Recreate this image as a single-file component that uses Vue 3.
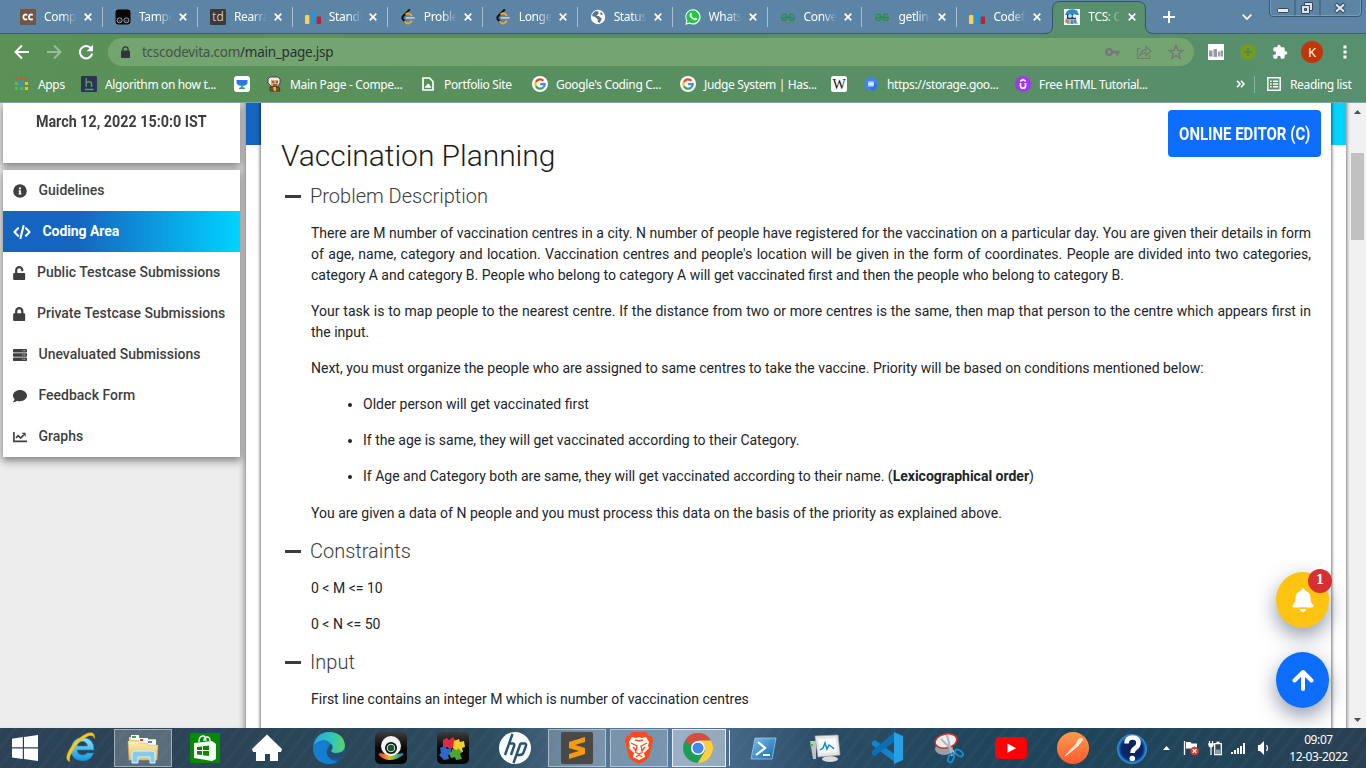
<script setup>
const tabs = [
  { icon: 'cc', title: 'Compete' },
  { icon: 'tamper', title: 'Tampermonkey' },
  { icon: 'td', title: 'Rearrange' },
  { icon: 'bars', title: 'Standings' },
  { icon: 'leet', title: 'Problems' },
  { icon: 'leet', title: 'Longest' },
  { icon: 'globe', title: 'Status' },
  { icon: 'whats', title: 'WhatsApp' },
  { icon: 'gfg', title: 'Convert' },
  { icon: 'gfg', title: 'getline' },
  { icon: 'bars', title: 'Codeforces' },
  { icon: 'tcs', title: 'TCS: CodeVita', active: true },
]
const bookmarks = [
  { icon: 'apps', text: 'Apps' },
  { icon: 'hack', text: 'Algorithm on how t...' },
  { icon: 'cup' },
  { icon: 'prof', text: 'Main Page - Compe...' },
  { icon: 'doc', text: 'Portfolio Site' },
  { icon: 'google', text: "Google's Coding C..." },
  { icon: 'google', text: 'Judge System | Has...' },
  { icon: 'wiki' },
  { icon: 'hex', text: 'https://storage.goo...' },
  { icon: 'udemy', text: 'Free HTML Tutorial...' },
]
const menu = [
  { icon: 'info', text: 'Guidelines', w: 14 },
  { icon: 'code', text: 'Coding Area', w: 18, active: true },
  { icon: 'unlock', text: 'Public Testcase Submissions', w: 12.5 },
  { icon: 'lock', text: 'Private Testcase Submissions', w: 12.5 },
  { icon: 'server', text: 'Unevaluated Submissions', w: 14 },
  { icon: 'comment', text: 'Feedback Form', w: 14 },
  { icon: 'chart', text: 'Graphs', w: 14 },
]
const tasks = [
  { icon: 'ie' }, { icon: 'explorer', box: true }, { icon: 'store' }, { icon: 'house' }, { icon: 'edge' },
  { icon: 'cam' }, { icon: 'puzzle' }, { icon: 'hp' }, { icon: 'sublime', box: true }, { icon: 'brave', box: true },
  { icon: 'chrome', box: true, front: true }, { icon: 'shell' }, { icon: 'monitor' }, { icon: 'vscode' },
  { icon: 'snip' }, { icon: 'youtube' }, { icon: 'postman' }, { icon: 'help' },
]
</script>

<template>
  <div class="screen">
    <svg class="sprite" aria-hidden="true">
      <defs>
        <linearGradient id="gEdge" x1="0" y1="0" x2="1" y2="0"><stop offset="0" stop-color="#2aa7e0" /><stop offset=".6" stop-color="#2fc6b8" /><stop offset="1" stop-color="#62d658" /></linearGradient>
        <linearGradient id="gEdge2" x1="0" y1="0" x2="0" y2="1"><stop offset="0" stop-color="#1d8fdc" /><stop offset="1" stop-color="#0b4fa0" /></linearGradient>
        <linearGradient id="gFolder" x1="0" y1="0" x2="0" y2="1"><stop offset="0" stop-color="#fdf0b6" /><stop offset="1" stop-color="#e6bd5c" /></linearGradient>
        <linearGradient id="gShell" x1="0" y1="0" x2="1" y2="1"><stop offset="0" stop-color="#7cc0ea" /><stop offset="1" stop-color="#1764ab" /></linearGradient>
        <linearGradient id="gPost" x1="0" y1="0" x2="0" y2="1"><stop offset="0" stop-color="#ff9a4a" /><stop offset="1" stop-color="#ff5a30" /></linearGradient>
        <linearGradient id="gIe" x1="0" y1="0" x2="0" y2="1"><stop offset="0" stop-color="#8fe4ff" /><stop offset="1" stop-color="#1495dd" /></linearGradient>
        <linearGradient id="gRain"><stop offset="0" stop-color="#e33" /><stop offset=".4" stop-color="#f6b31c" /><stop offset=".7" stop-color="#4ec04e" /><stop offset="1" stop-color="#2c6de0" /></linearGradient>
        <radialGradient id="gHelp"><stop offset="0" stop-color="#0a1e50" /><stop offset=".75" stop-color="#082a72" /><stop offset="1" stop-color="#2f9be8" /></radialGradient>
        <linearGradient id="gBlack" x1="0" y1="0" x2="0" y2="1"><stop offset="0" stop-color="#3c3c3c" /><stop offset=".5" stop-color="#080808" /></linearGradient>
      </defs>
      <symbol id="cc" viewBox="0 0 16 16"><rect width="16" height="16" fill="#725544" /><path d="M7.3 5.8Q3.4 4.6 3.4 8T7.3 10.2M12.8 5.8Q8.9 4.6 8.9 8T12.8 10.2" fill="none" stroke="#fff" stroke-width="1.8" /></symbol>
      <symbol id="tamper" viewBox="0 0 16 16"><rect width="16" height="16" rx="3" fill="#080808" stroke="#b6c2cb" stroke-width=".6" /><circle cx="4.6" cy="11.3" r="2.5" fill="#111" stroke="#9fb0bd" stroke-width=".9" /><circle cx="11.4" cy="11.3" r="2.5" fill="#111" stroke="#9fb0bd" stroke-width=".9" /><path d="M3.8 11.8h1.8m5 0h1.8" stroke="#4a6c8c" stroke-width="1.2" /></symbol>
      <symbol id="td" viewBox="0 0 16 16"><rect width="16" height="16" rx="1" fill="#3a3a3a" /><text x="8" y="12.3" text-anchor="middle" font-family="Noto Sans, sans-serif" font-size="12" font-weight="300" fill="#eee">td</text></symbol>
      <symbol id="bars" viewBox="0 0 16 16"><rect x="0" y="6" width="4.4" height="9" rx="1" fill="#fbcf52" /><rect x="5.8" y="3" width="4.4" height="12" rx="1" fill="#2197d5" /><rect x="11.6" y="7.4" width="4.4" height="7.6" rx="1" fill="#b92332" /></symbol>
      <symbol id="leet" viewBox="0 0 16 16"><path d="M9.2 1 3.3 7q-1.8 2 0 3.8l2 2.2" fill="none" stroke="#111" stroke-width="2" stroke-linecap="round" /><path d="m5 12.7 1.2 1.1q1.8 1.5 3.7 0l1.6-1.5M6.2 5q2-1.6 3.7 0l1.6 1.2" fill="none" stroke="#f5a42a" stroke-width="1.9" stroke-linecap="round" /><path d="M6.6 8.8H14" stroke="#c5c7c9" stroke-width="1.8" stroke-linecap="round" /></symbol>
      <symbol id="globe" viewBox="0 0 16 16"><circle cx="8" cy="8" r="7.2" fill="#fff" /><path d="M2.4 5 5.5 2l2.7.6.6 1.8-2.4 2 2.6.9 2.8 2.4-2.2 4.3-2-1.5.2-2.2-3-2.6-2.5-.5z" fill="#5a7187" /><path d="m11 3 2 2.2-1.7 1-1.2-1.4z" fill="#5a7187" /></symbol>
      <symbol id="whats" viewBox="0 0 16 16"><path d="M.3 15.7 1.4 11.8A7.6 7.6 0 1 1 4.5 14.7Z" fill="#fff" /><path d="m1.7 14.2.8-2.7A6.4 6.4 0 1 1 4.8 13.5Z" fill="#1cc83d" /><path d="M5.2 4.1c1-1 1.4.2 1.8 1.4L6.5 6.8q1 1.8 2.8 2.5l1-.9 2 1.1q-.2 2-2.2 2Q6.8 11 4.8 7.7 4 5.7 5.2 4.1Z" fill="#fff" /></symbol>
      <symbol id="gfg" viewBox="0 0 16 16"><path d="M2.2 6.2Q5.800 3.800 6.700 7 7.600 11.300 4.300 11.500 1.500 11.300 1.600 8.500h12.800Q14.500 11.300 11.700 11.500 8.400 11.300 9.300 7q.9-3.200 4.500-.8" fill="none" stroke="#2f8d46" stroke-width="1.400" /></symbol>
      <symbol id="tcs" viewBox="0 0 16 16"><rect width="16" height="16" fill="#f5f5f5" /><path d="M1 6 3 2q4-3 10-.5L15 6z" fill="#2b8fc6" /><path d="M3 5h9v5H3z" fill="#335" /><circle cx="6" cy="7" r="2" fill="#a9dcf3" /><circle cx="10.5" cy="7" r="2" fill="#d6f0fb" /><path d="M4 10h8l2 5H3z" fill="#8abfd8" /><path d="m2 9 3 3-1 3-3-2z" fill="#b38d56" /><path d="M8 11v4m3-4v3" stroke="#27506f" /></symbol>
      <symbol id="apps" viewBox="0 0 16 16"><path d="M1 1h3v3H1zm5 0h3v3H6zm5 0h3v3h-3z" fill="#f14438" /><path d="M1 6h3v3H1zm0 5h3v3H1zm5 0h3v3H6z" fill="#45c163" /><path d="M6 6h3v3H6z" fill="#3a8cf4" /><path d="M11 6h3v3h-3zm0 5h3v3h-3z" fill="#fbb912" /></symbol>
      <symbol id="hack" viewBox="0 0 16 16"><rect width="16" height="16" rx="1" fill="#2b3454" /><path d="M5.2 2v9M5.2 7.3Q6 5.8 8 5.8q2.6 0 2.6 2.6V11M3.8 13.5h8.5" fill="none" stroke="#5a9b66" stroke-width="1.4" /></symbol>
      <symbol id="cup" viewBox="0 0 16 16"><rect width="16" height="16" rx="3" fill="#fff" /><path d="M2.5 4h11v3q-1 2.7-4.2 2.7H6.7Q3.5 9.7 2.5 7z" fill="#2b79e8" /><path d="M8 9.5q0 2.5 3 3H5q3-.5 3-3" fill="#1eae6a" stroke="#1eae6a" /></symbol>
      <symbol id="prof" viewBox="0 0 16 16"><path d="m2 3 2-2h8l2 2v4l-2 3H5L2 7z" fill="#eceae6" stroke="#3b2a20" stroke-width=".8" /><path d="M5 4h7v6H5z" fill="#e5a36a" /><path d="M6 6h2m2 0h2M7 9h4" stroke="#322" /><path d="M4 11h9l1 4H4z" fill="#8a4d20" stroke="#322" stroke-width=".7" /><path d="M7 11h3v4H8z" fill="#efb03a" /></symbol>
      <symbol id="doc" viewBox="0 0 16 16"><path d="M3 2h6.5L13 5.5V14H3z" fill="none" stroke="#fff" stroke-width="1.7" /><path d="M4.8 11.7q0-2 1.5-2 .6-2 2-1.7Q10 8 10 9.7q1.3.3 1.2 2z" fill="#fff" /></symbol>
      <symbol id="google" viewBox="0 0 16 16"><circle cx="8" cy="8" r="8" fill="#fff" /><g fill="none" stroke-width="2.2"><path d="M11.4 4.7A4.7 4.7 0 0 0 3.9 5.9" stroke="#ea4335" /><path d="M3.9 5.9a4.7 4.7 0 0 0 0 4.3" stroke="#fbbc05" /><path d="M3.9 10.2a4.7 4.7 0 0 0 7.3 1.3" stroke="#34a853" /><path d="M11.2 11.5q1.6-1.4 1.5-3.4H8.2" stroke="#4285f4" /></g></symbol>
      <symbol id="wiki" viewBox="0 0 16 16"><rect width="16" height="16" rx="2.5" fill="#fff" /><text x="8" y="12.5" text-anchor="middle" font-family="Liberation Serif, serif" font-size="14" fill="#111">W</text></symbol>
      <symbol id="hex" viewBox="0 0 16 16"><path d="M4.500 1.500h7L15.500 8l-4 6.500h-7L.5 8z" fill="#4384f3" /><path d="m10.500 5.500 4 4-2.800 5H9L5.500 11z" fill="#3470dc" /><path d="M5.200 5.400h5.600v5.200H5.200z" fill="#b9d0fa" /><path d="M5.200 8h5.600" stroke="#e8f0fe" stroke-width="1.400" /></symbol>
      <symbol id="udemy" viewBox="0 0 16 16"><circle cx="8" cy="8" r="8" fill="#a435f0" /><path d="M5.5 7v2.7q0 2.5 2.500 2.500t2.500-2.500V7M5.300 5.200 8 3.600l2.700 1.600" fill="none" stroke="#fff" stroke-width="1.700" /></symbol>
      <symbol id="info" viewBox="0 0 512 512"><path d="M256 8a248 248 0 1 0 0 496 248 248 0 0 0 0-496zm0 110a42 42 0 1 1 0 84 42 42 0 0 1 0-84zm56 254c0 7-5 12-12 12h-88c-7 0-12-5-12-12v-24c0-7 5-12 12-12h12v-64h-12c-7 0-12-5-12-12v-24c0-7 5-12 12-12h64c7 0 12 5 12 12v100h12c7 0 12 5 12 12z" fill="currentColor" /></symbol>
      <symbol id="code" viewBox="0 0 640 512"><path d="M175 120 45 256l130 136M465 120l130 136-130 136M375 35 265 477" fill="none" stroke="currentColor" stroke-width="76" stroke-linejoin="round" stroke-linecap="round" /></symbol>
      <symbol id="lock" viewBox="0 0 448 512"><path d="M400 224h-24v-72a152 152 0 0 0-304 0v72H48c-27 0-48 21-48 48v192c0 27 21 48 48 48h352c27 0 48-21 48-48V272c0-27-21-48-48-48zm-104 0H152v-72a72 72 0 0 1 144 0z" fill="currentColor" /></symbol>
      <symbol id="unlock" viewBox="0 0 448 512"><path d="M400 256H152V153a72 72 0 0 1 144-1v16c0 13 11 24 24 24h32c13 0 24-11 24-24v-16a152 152 0 0 0-304 0v104H48c-27 0-48 21-48 48v160c0 27 21 48 48 48h352c27 0 48-21 48-48V304c0-27-21-48-48-48z" fill="currentColor" /></symbol>
      <symbol id="server" viewBox="0 0 512 512"><rect y="40" width="512" height="122" rx="24" fill="currentColor" /><rect y="195" width="512" height="122" rx="24" fill="currentColor" /><rect y="350" width="512" height="122" rx="24" fill="currentColor" /><path d="M340 101h110M340 256h110M340 411h110" stroke="#c5cad4" stroke-width="42" stroke-dasharray="42 26" /></symbol>
      <symbol id="comment" viewBox="0 0 512 512"><path d="M256 32C115 32 0 125 0 240c0 50 21 95 57 131-13 50-54 95-55 96-3 2-3 6-2 9s4 4 7 4c66 0 116-32 141-51 32 12 69 19 108 19 141 0 256-93 256-208S397 32 256 32z" fill="currentColor" /></symbol>
      <symbol id="chart" viewBox="0 0 512 512"><path d="M32 70v346h480M105 290l85-85 90 90 110-110" fill="none" stroke="currentColor" stroke-width="60" /><path d="M312 96h136q16 0 16 16v136z" fill="currentColor" /></symbol>

      <symbol id="ie" viewBox="0 0 32 32"><path d="M29 18H12q1 5 5.500 5 3.500 0 4.500-2h6.500q-3 8-11 8Q6 28 6 17.500 7 6 17.500 5.500 29 6 29 18M12 14h10.500q-1-4.500-5-4.500T12 14" fill="url(#gIe)" stroke="#1680bb" stroke-width=".6" /><path d="M5 29.500Q-1.500 28 5 17 12 6 22 1.500q8-3 7.500 5Q28.500 2 23 4 12 9 7 20q-4 7-2 9.500" fill="#f9ca20" stroke="#edae13" stroke-width=".6" /></symbol>
      <symbol id="explorer" viewBox="0 0 32 32"><path d="M2 5h10l1 2h16v21H2z" fill="#e9cf83" /><path d="M4 3h8v5H4z" fill="#fff" /><path d="M5 4h4v2H5z" fill="#3bab49" /><path d="M12 6h9v5h-9z" fill="#fff" /><path d="M13 7h3v2h-3z" fill="#d9422a" /><path d="M20 8h9v5h-9z" fill="#fff" /><path d="M21 9h4v2h-4z" fill="#3b88e4" /><path d="M1 9h10l2 2h7l1 2h10l-1 15H2z" fill="url(#gFolder)" stroke="#d6aa4c" stroke-width=".5" /><path d="M5 31V22q0-3 3-3h17q3 0 3 3v9h-5v-6H11v6z" fill="#87cbea" stroke="#d6f4ff" /></symbol>
      <symbol id="store" viewBox="0 0 32 32"><path d="M1 1h30v30H1z" fill="#068a04" /><path d="m5 11 18-2 4 3v15l-4 2-18-3z" fill="#fff" /><path d="M10 10q0-6 4-6 3 0 3 5M15 9q0-4 3-4t3 4" fill="none" stroke="#fff" stroke-width="1.3" /><path d="m8 15 5-.6V18H8zm6-.7 6-.7V18h-6zM8 19h5v4l-5-.6zm6 0h6v5l-6-.8z" fill="#068a04" /></symbol>
      <symbol id="house" viewBox="0 0 32 32"><path d="M16 2.500 31 17l-1 3h-3v9h-8v-7h-5v7H5v-9H2l-1-3z" fill="#fff" /></symbol>
      <symbol id="edge" viewBox="0 0 32 32"><circle cx="16" cy="16" r="16" fill="url(#gEdge2)" /><path d="M.5 14Q3 0 17 0q14 1 15 14-1 7-9 7-4 0-5-2 3-4 0-7-5-6-11-3Q2 11 .5 14" fill="url(#gEdge)" /><path d="M18 12q-6 3-4 10 3 7 15 3l3-7q-4 4-9 3-4 0-5-2 3-4 0-7" fill="#284d69" /><path d="M.3 16Q4 10 10 11q5 1 6 3-5 7 0 12 3 3 9 3-6 5-15 2Q0 27 .3 16" fill="#147fd0" /></symbol>
      <symbol id="cam" viewBox="0 0 32 32"><rect width="32" height="32" rx="5" fill="url(#gBlack)" /><path d="M4 22q10 10 24 0-10 3-24 0" fill="url(#gRain)" stroke="url(#gRain)" stroke-width="2" /><circle cx="16" cy="14" r="10" fill="#f2f2f2" /><circle cx="16" cy="16" r="6" fill="#111" /><circle cx="16" cy="16" r="4.300" fill="#c9e6cf" /><circle cx="16" cy="16" r="3.200" fill="#1c532f" /></symbol>
      <symbol id="puzzle" viewBox="0 0 32 32"><rect width="32" height="32" rx="5" fill="url(#gBlack)" /><path d="m6 8 4-2 2 2 4-3 3 4-1 6-5 2-3-2-4 1z" fill="#e22843" /><path d="m17 9 5-2 1 3 4-1 1 6-3 1 1 4-6 1-4-5z" fill="#f6cc29" /><path d="m3 16 5-2 2 3 4-1 1 6-4 1 1 4-5 1-5-5 2-2z" fill="#3265cc" /><path d="m15 17 5 1 1-2 4 4-2 2 2 5-6 1-1-3-4 1-2-5 3-1z" fill="#4fa62e" /></symbol>
      <symbol id="hp" viewBox="0 0 32 32"><circle cx="16" cy="16" r="16" fill="#f8fafb" /><path d="M13.500 2 6 23m3.500-11.500h4q2.500 0 1.600 2.500L12 23m9.500-11.500L14.500 31m6.800-19.500h4q2.500 0 1.600 2.500l-2.400 6.500q-1 2.500-3.500 2.500h-3" fill="none" stroke="#28536f" stroke-width="2.400" /></symbol>
      <symbol id="sublime" viewBox="0 0 32 32"><rect width="32" height="32" rx="2" fill="#4a4948" /><path d="m8 10 16-5v5L14 13l10 3v6L8 27v-5l10-3-10-3z" fill="#f99910" /></symbol>
      <symbol id="brave" viewBox="0 0 32 32"><path d="M9 0h14l3 4 2-1 2 5-1 5-3 12-4 4-6 3-6-3-4-4L3 13 2 8l2-5 2 1z" fill="#fb4b1b" /><path d="m9 5 4 1 3-1 3 1 4-1 3 5-1 4 1 2-5 5 1 4-6 3-6-3 1-4-5-5 1-2-1-4z" fill="#fff" /><path d="m8 11 6 3-1 5-3-4m14-4-6 3 1 5 3-4M12 8l4 1 4-1m-8 12 4 2 4-2m-7 5 3-2 3 2" fill="none" stroke="#fb4b1b" stroke-width="1.300" /></symbol>
      <symbol id="chrome" viewBox="0 0 32 32"><circle cx="16" cy="16" r="15" fill="#1f9d58" /><path d="M3 8.500A15 15 0 0 1 29 8.500H16q-5 0-6.800 4.800z" fill="#dd4b3e" /><path d="M3 8.500 9.500 20 16 23 3 8.500" fill="#1f9d58" /><path d="M29 8.500A15 15 0 0 1 15.600 31L22.500 20q2.500-7-6.500-11.500z" fill="#ffcd41" /><circle cx="16" cy="16" r="7" fill="#fff" /><circle cx="16" cy="16" r="5.500" fill="#4586f1" /></symbol>
      <symbol id="shell" viewBox="0 0 32 32"><path d="M8 6h21l-4 21H4z" fill="url(#gShell)" stroke="#8fcaf0" stroke-width=".8" /><path d="m11 10 7 6-9 7m7 0h7" fill="none" stroke="#fff" stroke-width="2.200" /></symbol>
      <symbol id="monitor" viewBox="0 0 32 32"><path d="M1 9h6v18H4z" fill="#bfc3c4" /><path d="M1 13h3" stroke="#48bb3f" stroke-width="2" /><ellipse cx="21" cy="27" rx="8" ry="3" fill="#d8dbdc" /><path d="m6 4 23-1 2 20-22 2z" fill="#e6e7e5" stroke="#a5a9a9" stroke-width=".7" /><path d="m9 7 18-1 1 14-17 1z" fill="#f7fcff" /><path d="m11 18 3-2 2-5 2 6 2-4 3 2 2 2" fill="none" stroke="#1786c8" stroke-width="1.500" /></symbol>
      <symbol id="vscode" viewBox="0 0 32 32"><path d="m1 10 3-2 21 15v8L1 13z" fill="#1682c8" /><path d="m1 22 3 2L24 9V0L1 19z" fill="#0c6eb3" /><path d="m23 0 9 4v24l-9 4z" fill="#27a0e8" /></symbol>
      <symbol id="snip" viewBox="0 0 32 32"><ellipse cx="11" cy="17" rx="9" ry="6" fill="#9aa0a7" /><ellipse cx="13" cy="9" rx="11" ry="7" transform="rotate(-12 13 9)" fill="#eee" stroke="#d52e2b" stroke-width="1.500" /><path d="m8 7 15 15M14 3l5 21" stroke="#b0b8be" stroke-width="2" /><ellipse cx="18" cy="26" rx="2.600" ry="4.500" transform="rotate(20 18 26)" fill="none" stroke="#1690da" stroke-width="1.800" /><ellipse cx="26" cy="21" rx="2.600" ry="4.500" transform="rotate(-55 26 21)" fill="none" stroke="#1690da" stroke-width="1.800" /></symbol>
      <symbol id="youtube" viewBox="0 0 32 32"><rect y="5" width="32" height="22" rx="4.500" fill="#fb0204" /><path d="m12.500 11.500 8.500 4.700-8.500 4.600z" fill="#fff" /></symbol>
      <symbol id="postman" viewBox="0 0 32 32"><circle cx="16" cy="16" r="16" fill="url(#gPost)" /><path d="M8 24 20 11l2 2-11 9zM19.500 10.500l2.500-3.500q3.500-2 3.500 1l-3.500 4.500" fill="#ffe3d2" stroke="#fff" stroke-width=".7" /></symbol>
      <symbol id="help" viewBox="0 0 32 32"><circle cx="16" cy="17" r="14.600" fill="url(#gHelp)" stroke="#2a95e3" stroke-width=".8" /><path d="M10.500 11.500q0-6 6-6t6 5.500q0 3-3 5t-3 5" fill="none" stroke="#fff" stroke-width="4.600" /><circle cx="16.300" cy="26.500" r="2.800" fill="#fff" /></symbol>
    </svg>

    <header class="browser">
      <div class="tabstrip">
        <div v-for="(t, i) in tabs" :key="i" class="tab" :class="{ active: t.active, nosep: i === 10 }">
          <svg v-if="t.active" class="tabshape" viewBox="0 0 110 34"><path d="M0 33.5Q7.500 33.500 7.500 26V9Q7.500 1.500 15 1.500H93Q100.500 1.500 100.500 9V26Q100.500 33.500 108.500 33.500V35H0Z" fill="#588f6d" stroke="#37536b" /></svg>
          <svg class="fav"><use :href="'#' + t.icon" /></svg>
          <span class="tabtitle">{{ t.title }}</span>
          <svg class="close" viewBox="0 0 8 8"><path d="m.7.7 6.600 6.600M7.300.7.7 7.300" stroke="#fff" stroke-width="1.700" /></svg>
        </div>
        <svg class="plus" viewBox="0 0 12 12"><path d="M6 0v12M0 6h12" stroke="#fff" stroke-width="2" /></svg>
        <svg class="chev" viewBox="0 0 10 6"><path d="m.7.7 4.300 4.300L9.300.7" fill="none" stroke="#fff" stroke-width="1.700" /></svg>
        <svg class="winctl" viewBox="0 0 94 17">
          <path d="M.5 0v12q0 4.500 4 4.500h84q4 0 4-4.500V0M26 0v16M51 0v16" fill="none" stroke="#3d566c" />
          <path d="M1.500 0v12q0 3.500 3 3.500h84q3 0 3-3.500V0" fill="none" stroke="#8eadc4" stroke-width=".6" />
          <rect x="8.500" y="8.500" width="11" height="4" rx="1" fill="#e5eaef" stroke="#364859" />
          <path d="M35.500 2.500h8v8h-8z" fill="#dce5ec" stroke="#364859" /><path d="M32.500 5.500h8v8h-8z" fill="#dce5ec" stroke="#364859" /><path d="M35.500 8.500h2v2h-2z" fill="#5b84a5" stroke="#364859" />
          <path d="m66.500 4 9 8m0-8-9 8" stroke="#364859" stroke-width="4.200" /><path d="m67 4.500 8 7m0-7-8 7" stroke="#e5eaef" stroke-width="2.200" />
        </svg>
      </div>

      <div class="toolbar">
        <svg class="nav" viewBox="0 0 16 16"><path d="M15 8H2m6-6.500L1.500 8 8 14.500" fill="none" stroke="#fff" stroke-width="2" /></svg>
        <svg class="nav dim" viewBox="0 0 16 16"><path d="M1 8h13M8 1.500 14.500 8 8 14.500" fill="none" stroke="#fff" stroke-width="2" /></svg>
        <svg class="nav" viewBox="0 0 16 16"><path d="M13 4.300A6.200 6.200 0 1 0 14.200 9.500" fill="none" stroke="#fff" stroke-width="2" /><path d="M15 .8v6.400H8.600z" fill="#fff" /></svg>
        <div class="omnibox">
          <svg class="padlock" viewBox="0 0 9 12"><rect y="4.500" width="9" height="7.500" rx="1" fill="#30363b" /><path d="M2 5V3q0-2.200 2.500-2.200T7 3v2" fill="none" stroke="#30363b" stroke-width="1.300" /></svg>
          <span class="url"><span class="host">tcscodevita.com</span>/main_page.jsp</span>
          <svg class="om" viewBox="0 0 16 16"><circle cx="5" cy="8" r="2.900" fill="none" stroke="#76777a" stroke-width="2.400" /><path d="M8 8h7.500m-2.200 0v3.500" stroke="#76777a" stroke-width="2.600" /></svg>
          <svg class="om" viewBox="0 0 16 16"><path d="M4 4.500H1.500v10h12V11M4 11q1-5 6-5.300V2.500L15 7l-5 4.500V8.600Q6.500 8.600 4 11Z" fill="none" stroke="#76777a" stroke-width="1.200" /></svg>
          <svg class="om" viewBox="0 0 16 16"><path d="m8 1.700 1.800 4.500 4.800.3-3.700 3 1.200 4.800L8 11.700l-4.100 2.600 1.200-4.800-3.700-3 4.800-.3z" fill="none" stroke="#76777a" stroke-width="1.500" /></svg>
        </div>
        <svg class="ext e1" viewBox="0 0 16 16"><path d="M0 0h16v16H0z" fill="#fff" /><path d="M1 6.500h3.500v6H1zM5.500 5H9v8H5.500zM10 7.500h1.800v5H10zm2.500-1H15v6h-2.500z" fill="#9a9a9a" /></svg>
        <svg class="ext e2" viewBox="0 0 16 16"><circle cx="8" cy="8" r="8" fill="#74991f" /><path d="M8 4v8M4 8h8" stroke="#4e8a4b" stroke-width="2" /></svg>
        <svg class="ext e3" viewBox="0 0 24 24"><path d="M20.500 11H19V7a2 2 0 0 0-2-2h-4V3.500a2.500 2.500 0 0 0-5 0V5H4a2 2 0 0 0-2 2v3.800h1.500a2.700 2.700 0 0 1 0 5.400H2V20a2 2 0 0 0 2 2h3.800v-1.500a2.700 2.700 0 0 1 5.400 0V22H17a2 2 0 0 0 2-2v-4h1.500a2.500 2.500 0 0 0 0-5z" fill="#fff" /></svg>
        <span class="avatar">K</span>
        <svg class="dots" viewBox="0 0 4 14"><path d="M.5.500h3v3h-3zm0 5h3v3h-3zm0 5h3v3h-3z" fill="#fff" /></svg>
      </div>

      <div class="bookmarks">
        <div v-for="(b, i) in bookmarks" :key="i" class="bm">
          <svg class="bmicon"><use :href="'#' + b.icon" /></svg><span v-if="b.text">{{ b.text }}</span>
        </div>
        <svg class="more" viewBox="0 0 9 8"><path d="m1 .7 3 3.300-3 3.300M5 .7 8 4 5 7.300" fill="none" stroke="#fff" stroke-width="1.600" /></svg>
        <div class="reading">
          <svg viewBox="0 0 14 14"><path d="M.8.8h12.400v12.400H.8z" fill="none" stroke="#fff" stroke-width="1.500" /><path d="M3 4.200h1.700m1.300 0h5.200M3 7h1.700M6 7h5.200M3 9.800h1.700m1.300 0h5.200" stroke="#fff" stroke-width="1.500" /></svg>
          <span>Reading list</span>
        </div>
      </div>
    </header>

    <main class="page">
      <aside class="side">
        <div class="card date"><span>March 12, 2022 15:0:0 IST</span></div>
        <nav class="card menu">
          <a v-for="m in menu" :key="m.text" :class="{ on: m.active }">
            <svg :style="{ width: m.w + 'px' }"><use :href="'#' + m.icon" /></svg><span>{{ m.text }}</span>
          </a>
        </nav>
      </aside>

      <section class="wrap">
        <div class="band"></div>
        <article class="sheet">
          <h1>Vaccination Planning</h1>
          <h2><i></i>Problem Description</h2>
          <div class="body">
            <p>There are M number of vaccination centres in a city. N number of people have registered for the vaccination on a particular day. You are given their details in form of age, name, category and location. Vaccination centres and people's location will be given in the form of coordinates. People are divided into two categories, category A and category B. People who belong to category A will get vaccinated first and then the people who belong to category B.</p>
            <p>Your task is to map people to the nearest centre. If the distance from two or more centres is the same, then map that person to the centre which appears first in the input.</p>
            <p>Next, you must organize the people who are assigned to same centres to take the vaccine. Priority will be based on conditions mentioned below:</p>
            <ul>
              <li>Older person will get vaccinated first</li>
              <li>If the age is same, they will get vaccinated according to their Category.</li>
              <li>If Age and Category both are same, they will get vaccinated according to their name. (<b>Lexicographical order</b>)</li>
            </ul>
            <p>You are given a data of N people and you must process this data on the basis of the priority as explained above.</p>
          </div>
          <h2><i></i>Constraints</h2>
          <div class="body">
            <p>0 &lt; M &lt;= 10</p>
            <p>0 &lt; N &lt;= 50</p>
          </div>
          <h2><i></i>Input</h2>
          <div class="body"><p>First line contains an integer M which is number of vaccination centres</p></div>
        </article>
        <button class="editor"><span>ONLINE EDITOR (C)</span></button>
        <div class="fab bell">
          <svg viewBox="0 0 448 512"><path d="M224 512c35 0 64-29 64-64H160c0 35 29 64 64 64zm215-150c-19-20-55-51-55-154 0-78-54-140-128-155V32a32 32 0 0 0-64 0v21C118 68 64 130 64 208c0 103-36 134-55 154-6 6-9 14-9 22 0 16 13 32 32 32h384c19 0 32-16 32-32 0-8-3-16-9-22z" fill="#fff" /><path d="M150 432h148" stroke="#ffc312" stroke-width="30" /></svg>
          <span class="badge">1</span>
        </div>
        <div class="fab up"><svg viewBox="0 0 22 22"><path d="M11 20V3M2.500 11.500 11 3l8.500 8.500" fill="none" stroke="#fff" stroke-width="4" stroke-linecap="round" stroke-linejoin="round" /></svg></div>
      </section>

      <div class="scroll">
        <svg viewBox="0 0 7 4"><path d="M0 4 3.500 0 7 4z" fill="#505050" /></svg>
        <div class="thumb"></div>
        <svg viewBox="0 0 7 4"><path d="m0 0 3.500 4L7 0z" fill="#505050" /></svg>
      </div>
    </main>

    <footer class="taskbar">
      <div class="start"><svg viewBox="0 0 26 26"><path d="M0 3.700 10.800 2v10.300H0zM12 1.900 26 0v12.300H12zM0 13.500h10.800V24L0 22.400zm12 0h14V26l-14-1.900z" fill="#fff" /></svg></div>
      <div v-for="t in tasks" :key="t.icon" class="task" :class="{ box: t.box, front: t.front }">
        <svg><use :href="'#' + t.icon" /></svg>
      </div>
      <div class="tray">
        <svg viewBox="0 0 116 20">
          <path d="m5 12 3.500-4L12 12z" fill="#fff" />
          <path d="M26.500 3v14" stroke="#fff" stroke-width="1.300" /><path d="M28 4h4.500l1 1.500H39v6h-5.500l-1-1H28z" fill="#fff" /><circle cx="36.500" cy="13" r="4.300" fill="#d83a2b" /><path d="m34.700 11.200 3.600 3.600m0-3.600-3.600 3.600" stroke="#fff" stroke-width="1.300" />
          <path d="M50 6h6M51.500 3v3m3-3v3M53 8v9" fill="none" stroke="#fff" stroke-width="1.200" /><path d="M50.500 5.500h5V8q-1 1.500-2.500 1.500T50.500 8z" fill="#fff" /><path d="M56.700 5.700h6.600v11h-6.600z" fill="#294a5c" stroke="#fff" stroke-width="1.300" /><path d="M58.500 4.300h3" stroke="#fff" stroke-width="1.400" /><path d="M58 11.500h4V16h-4z" fill="#8b9ea9" />
          <path d="M74 16v-2m3 2v-4m3 4V10m3 6V8m3 8V5" stroke="#fff" stroke-width="2" />
          <path d="M100 7h2l4-4v14l-4-4h-2z" fill="#fff" /><path d="M108.500 7q2 3 0 6" fill="none" stroke="#fff" stroke-width="1.200" />
        </svg>
      </div>
      <div class="clock"><span>09:07</span><span>12-03-2022</span></div>
    </footer>
  </div>
</template>

<style>
html, body { margin: 0; overflow: hidden; }
</style>

<style scoped>
* { box-sizing: border-box; }
svg { display: block; flex: none; }
.screen { width: 1366px; height: 768px; display: flex; flex-direction: column; overflow: hidden; font-family: Roboto, sans-serif; background: #fff; }
.sprite { position: absolute; width: 0; height: 0; }
.browser { height: 103px; flex: none; font-family: "Noto Sans", sans-serif; font-size: 12px; color: #fff; background: linear-gradient(90deg, #5a9157, #588f60 45%, #588f6e); border-bottom: 1px solid #7d9fae; }
.tabstrip { height: 34px; display: flex; align-items: center; padding-left: 8px; background: #5b84a5; border-bottom: 1px solid #3d5a70; }
.tab { position: relative; width: 94.95px; height: 34px; flex: none; display: flex; align-items: center; padding-left: 12px; }
.tab:not(.active):not(.nosep)::after { content: ""; position: absolute; right: 0; top: 7px; width: 1px; height: 20px; background: #a9bfd0; }
.tabshape { position: absolute; left: -7px; top: 0; width: 110px; height: 34px; }
.fav { position: relative; width: 16px; height: 16px; margin-right: 8px; }
.tabtitle { position: relative; width: 33px; overflow: hidden; white-space: nowrap; letter-spacing: -.35px; mask-image: linear-gradient(90deg, #000 55%, transparent); }
.close { position: relative; width: 8px; height: 8px; margin-left: 7px; }
.plus { width: 12px; height: 12px; margin-left: 15.5px; }
.chev { width: 10px; height: 6px; margin-left: 67px; }
.winctl { width: 94px; height: 17px; margin-left: 17px; align-self: flex-start; }
.toolbar { height: 36px; display: flex; align-items: center; padding-left: 14px; }
.nav { width: 16px; height: 16px; margin-right: 16px; }
.dim { opacity: .4; }
.omnibox { width: 1086px; height: 28px; margin-left: -2px; border-radius: 14px; background: #74a470; display: flex; align-items: center; padding: 0 10px 0 13px; }
.padlock { width: 9px; height: 12px; margin-right: 12px; }
.url { flex: 1; font-size: 13.5px; color: #2b3036; letter-spacing: -.25px; }
.host { color: #44534b; }
.om { width: 16px; height: 16px; margin-left: 16px; }
.ext { width: 16px; height: 16px; }
.e1 { margin-left: 14px; }
.e2 { margin-left: 16px; }
.e3 { margin-left: 16px; }
.avatar { width: 22px; height: 22px; border-radius: 50%; background: #bf360c; margin-left: 13px; display: flex; align-items: center; justify-content: center; font-size: 13px; }
.dots { width: 4px; height: 14px; margin-left: 20px; }
.bookmarks { height: 28px; display: grid; grid-template-columns: 67px 153px 32px 154px 112px 148px 151px 32px 152px 221px 18px 1fr; padding-left: 14px; align-items: center; white-space: nowrap; letter-spacing: -.35px; }
.bm { display: flex; align-items: center; gap: 8px; }
.bmicon { width: 16px; height: 16px; }
.more { width: 9px; height: 8px; }
.reading { display: flex; align-items: center; gap: 9px; border-left: 1px solid #8db69b; padding-left: 12px; }
.reading svg { width: 14px; height: 14px; }
.page { height: 625px; flex: none; display: flex; background: #ededed; overflow: hidden; }
.side { width: 246px; flex: none; padding: 0 5px 0 3px; border-right: 1px solid #a9a9a9; box-shadow: inset -5px 0 5px -3px #aaa; }
.card { background: #fff; color: #3f3f3f; box-shadow: 0 3px 8px 1px rgba(0,0,0,.45); }
.date { height: 60px; margin-bottom: 7px; font-weight: 700; font-size: 17px; line-height: 36px; text-align: center; }
.date span { display: inline-block; transform: scaleX(.843); white-space: nowrap; margin: 0 -20px; }
.menu { height: 287px; font-size: 14px; font-weight: 500; }
.menu a { height: 41px; display: flex; align-items: center; padding-left: 10px; gap: 11.5px; white-space: nowrap; }
.menu a svg { height: 14px; }
.menu a span { line-height: 18px; margin-bottom: 2px; }
.menu .on { color: #fff; background: linear-gradient(90deg, #1565c0 32%, #00d4ff); font-weight: 700; letter-spacing: -.08px; }
.wrap { position: relative; width: 1100px; flex: none; background: #fff; }
.band { height: 42px; background: linear-gradient(90deg, #1565c0 2%, #00d4ff 98%); }
.sheet { position: absolute; left: 15px; top: -10px; width: 1070px; height: 650px; background: #fff; padding: 47px 20px 0; box-shadow: 0 0 3px 1px rgba(0,0,0,.55); }
h1 { margin: 0; font-weight: 300; font-size: 30px; line-height: 32px; color: #1c1c1c; letter-spacing: -.05px; }
h2 { margin: 14px 0 0; height: 26px; display: flex; align-items: center; font-weight: 300; font-size: 20px; color: #3b3b3b; }
h1 + h2 { margin-top: 11px; }
h2 i { width: 16px; height: 3px; background: #3b3b3b; margin: 0 9px 0 4px; }
.body { padding-left: 30px; font-size: 14px; line-height: 21px; color: #212529; width: 1030px; }
.body p { margin: 0 0 15px; text-align: justify; }
.body p:first-child { padding-top: 14px; }
.body p:last-child { margin-bottom: 0; }
ul { margin: 0 0 16px; padding-left: 52px; }
li + li { margin-top: 15px; }
.editor { position: absolute; left: 922px; top: 7px; width: 153px; height: 47px; border: 0; border-radius: 4px; background: #0d6efd; color: #fff; font: 700 17.5px Roboto, sans-serif; white-space: nowrap; padding: 0; display: flex; justify-content: center; align-items: center; }
.editor span { transform: scaleX(.855); }
.fab { position: absolute; left: 1030px; width: 53px; height: 56px; border-radius: 50%; display: flex; align-items: center; justify-content: center; box-shadow: 0 8px 20px rgba(33,53,85,.5); }
.bell { top: 469px; background: #ffc312; }
.bell svg { width: 22px; height: 24px; }
.up { top: 549px; background: #0d6efd; }
.up svg { width: 22px; height: 22px; }
.badge { position: absolute; left: 32px; top: -3px; width: 24px; height: 24px; border-radius: 50%; background: #d63031; color: #fff; font: 700 12px/23px "DejaVu Serif", serif; text-align: center; }
.scroll { width: 20px; flex: none; padding: 7px 2px 6px 5px; display: flex; flex-direction: column; align-items: center; background: linear-gradient(90deg, #999, #d5d5d5 2px, #f1f1f1 4px); }
.scroll svg { width: 7px; height: 4px; }
.thumb { width: 13px; height: 87px; margin: 39px 0 auto; background: #c1c1c1; }
.taskbar { height: 40px; flex: none; display: flex; align-items: center; background: repeating-linear-gradient(128deg, rgba(110,160,180,.05) 0 3px, transparent 3px 11px), linear-gradient(90deg, #2c4156, #2a4556 22%, #2d4c60 36%, #527492 44%, #54779a 50%, #2c4c66 60%, #20455a 72%, #20455a 85%, #2a4052); }
.start { width: 50px; }
.start svg { width: 26px; height: 26px; margin-left: 12px; }
.task { position: relative; width: 58px; height: 38px; margin: 0 2px; flex: none; display: flex; align-items: center; justify-content: center; }
.task svg { width: 32px; height: 32px; }
.task:nth-last-child(3) { margin-left: -1px; }
.box { background: rgba(255,255,255,.22); border: 1px solid rgba(255,255,255,.45); }
.front { width: 54px; margin-right: 6px; background: rgba(255,255,255,.42); border-color: #e6edf2; box-shadow: 4px 0 0 -1px #4e6e87, 5px 0 0 -1px #dce6ed; }
.front svg { margin-left: -2px; }
.tray { width: 116px; margin-left: -5px; }
.tray svg { width: 116px; height: 20px; }
.clock { flex: 1; display: flex; flex-direction: column; align-items: center; padding-right: 3px; color: #fff; font: 12px/17px "Noto Sans", sans-serif; letter-spacing: -.4px; }
</style>
